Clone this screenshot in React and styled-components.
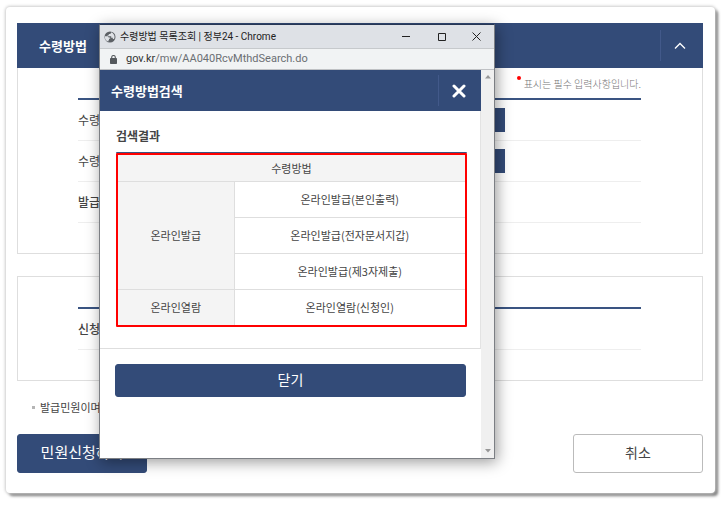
import React from "react";
import styled, { createGlobalStyle } from "styled-components";

const NAVY = "#334b78";

const GlobalStyle = createGlobalStyle`
  *, *::before, *::after { box-sizing: border-box; }
  body {
    margin: 0;
    background: #fff;
    color: #444;
    font-family: "Noto Sans CJK KR", "Noto Sans", sans-serif;
    font-size: 11px;
    line-height: 16px;
  }
  h1, h2, p { margin: 0; }
  button, input { font: inherit; }
`;

const Page = styled.div`
  padding: 7px 13px 12px 6px;
`;

const Card = styled.main`
  position: relative;
  padding: 16px 6px 20px 11px;
  border-radius: 4px;
  background: #fff;
  box-shadow: 0 0 3px 1px #ccc, 3px 3px 3px 0 #777;
`;

const Body = styled.div`
  padding-right: 6px;
`;

const Panel = styled.section`
  border: 1px solid #dedede;
  border-top-width: ${(p) => (p.$headed ? "0" : "1px")};
  margin-bottom: 22px;
`;

const PanelHeader = styled.header`
  display: flex;
  align-items: center;
  justify-content: space-between;
  height: 45px;
  margin: 0 -1px;
  padding-left: 22px;
  background: ${NAVY};
`;

const PanelTitle = styled.h2`
  color: #fff;
  font-size: 13px;
  font-weight: 700;
`;

const HeaderButton = styled.button`
  display: flex;
  align-items: center;
  justify-content: center;
  width: 43px;
  height: 31px;
  padding: 0 ${(p) => (p.$wide ? "4px" : "2px")} 0 0;
  border: 0;
  border-left: 1px solid #42598a;
  background: transparent;
`;

const PanelContent = styled.div`
  padding: ${(p) => p.$top} 61px 30px 60px;
`;

const Required = styled.p`
  display: flex;
  justify-content: flex-end;
  gap: 3px;
  height: 30px;
  padding-top: 8px;
  color: #777;
  font-size: 10px;
  font-weight: 300;

  &::before {
    content: "";
    width: 4px;
    height: 4px;
    border-radius: 50%;
    background: #f00;
  }
`;

const Fields = styled.div`
  border-top: 2px solid #3a5482;
`;

const FieldRow = styled.div`
  display: flex;
  align-items: center;
  height: 41px;
  border-bottom: 1px solid #eee;
`;

const FieldLabel = styled.span`
  flex: 0 0 120px;
  font-size: 12px;
  font-weight: ${(p) => (p.$strong ? 500 : 400)};
`;

const SearchButton = styled.button`
  width: 64px;
  height: 24px;
  margin-left: 243px;
  border: 0;
  background: ${NAVY};
`;

const Notice = styled.p`
  display: flex;
  align-items: center;
  gap: 5px;
  margin: -4px 0 19px 15px;

  &::before {
    content: "";
    width: 3px;
    height: 3px;
    background: #b5b5b5;
  }
`;

const Actions = styled.div`
  display: flex;
  justify-content: space-between;
`;

const ActionButton = styled.button`
  width: 130px;
  height: 39px;
  padding: 0 0 3px;
  border: 1px solid ${(p) => (p.$primary ? NAVY : "#bbb")};
  border-radius: 3px;
  background: ${(p) => (p.$primary ? NAVY : "#fff")};
  color: ${(p) => (p.$primary ? "#fff" : "#444")};
  font-size: ${(p) => (p.$primary ? "15px" : "14px")};
`;

const Popup = styled.section`
  position: absolute;
  top: 17px;
  left: 93px;
  width: 396px;
  border: 1px solid #7c7f84;
  border-top-color: #263654;
  background: #fff;
  box-shadow: 2px 3px 14px rgba(0, 0, 0, 0.4);
`;

const TitleBar = styled.header`
  display: flex;
  align-items: center;
  height: 24px;
  padding: 0 13px 0 4px;
  border-bottom: 1px solid #c6c9cc;
  background: #dee1e6;
`;

const WindowTitle = styled.h1`
  flex: 1;
  margin-left: 4px;
  color: #222;
  font-family: Roboto, "Noto Sans CJK KR", sans-serif;
  font-size: 10px;
  font-weight: 400;
  white-space: nowrap;
`;

const WindowControls = styled.div`
  display: flex;
  gap: 26px;
`;

const WindowButton = styled.button`
  display: flex;
  padding: 0;
  border: 0;
  background: transparent;
  color: #222;
`;

const AddressBar = styled.div`
  display: flex;
  align-items: center;
  gap: 9px;
  height: 21px;
  padding-left: 10px;
  border-bottom: 1px solid #bfc1c4;
  background: #f1f3f4;
`;

const Address = styled.p`
  color: #6b6f73;
  font-family: Roboto, sans-serif;
  font-size: 11px;

  b {
    color: #333;
    font-weight: 400;
  }
`;

const Viewport = styled.div`
  display: flex;
  height: 388px;
`;

const Document = styled.div`
  flex: 1;
`;

const ScrollBar = styled.div`
  display: flex;
  flex-direction: column;
  justify-content: space-between;
  align-items: center;
  width: 13px;
  padding: 5px 0;
  background: #f0f0f0;
`;

const PopupHeader = styled.header`
  display: flex;
  align-items: center;
  justify-content: space-between;
  height: 41px;
  padding-left: 11px;
  background: ${NAVY};
`;

const Results = styled.div`
  padding: 17px 13px 21px 16px;
  border-right: 1px solid #e3e3e3;
  border-bottom: 1px solid #dedede;
`;

const ResultsTitle = styled.h2`
  height: 25px;
  font-size: 12px;
  font-weight: 700;
`;

const Highlight = styled.div`
  border: 2px solid #f00;
  border-radius: 1px;
  box-shadow: 0 -1px 0 #3a5482;
`;

const ResultTable = styled.table`
  width: 100%;
  border-collapse: collapse;
  table-layout: fixed;
  text-align: center;

  th, td {
    height: 36px;
    padding: 0;
    border: 1px solid #dedede;
    font-weight: 400;
  }
  thead th { height: 26px; border-top: 0; }
  tr > :first-child { border-left: 0; }
  tr > :last-child { border-right: 0; }
  tbody tr > :only-child { border-left: 1px solid #dedede; }
  tbody tr:last-child > * { border-bottom: 0; }
  th { background: #f4f4f4; }
  col:first-child { width: 116px; }
`;

const PopupFooter = styled.footer`
  display: flex;
  padding: 15px 15px 0;
`;

const CloseButton = styled(ActionButton)`
  flex: 1;
  height: 33px;
  font-size: 14px;
`;

const groups = [
  {
    name: "온라인발급",
    items: ["온라인발급(본인출력)", "온라인발급(전자문서지갑)", "온라인발급(제3자제출)"],
  },
  { name: "온라인열람", items: ["온라인열람(신청인)"] },
];

const GlobeIcon = () => (
  <svg width="12" height="12" viewBox="0 0 12 12" aria-hidden="true">
    <circle cx="6" cy="6" r="5.5" fill="#5c6065" />
    <path d="M1 5.2h2.6l1.2 1.2h1.4v1.4H5v1.4h-.6v1.4A4.9 4.9 0 0 1 1 5.2ZM7 1.2v.9L6.2 3H4.8v1.3H3.6v.9h3.6v1.6h1.6v1.3h1.2A4.9 4.9 0 0 0 7 1.2Z" fill="#dee1e6" />
  </svg>
);

const LockIcon = () => (
  <svg width="7" height="9" viewBox="0 0 7 9" aria-hidden="true">
    <rect y="3" width="7" height="6" rx="0.8" fill="#54585c" />
    <path d="M1.7 3.5V2.3a1.8 1.8 0 0 1 3.6 0v1.2" fill="none" stroke="#54585c" strokeWidth="1.1" />
  </svg>
);

const ScrollArrow = ({ down }) => (
  <svg width="6" height="4" viewBox="0 0 6 4" aria-hidden="true">
    <path d={down ? "M0 0h6L3 3.5Z" : "M0 3.5h6L3 0Z"} fill="#979797" />
  </svg>
);

function SearchPopup() {
  return (
    <Popup aria-label="수령방법 목록조회">
      <TitleBar>
        <GlobeIcon />
        <WindowTitle>수령방법 목록조회 | 정부24 - Chrome</WindowTitle>
        <WindowControls>
          <WindowButton aria-label="최소화">
            <svg width="9" height="9" viewBox="0 0 9 9"><path d="M0 4.5h8" stroke="currentColor" /></svg>
          </WindowButton>
          <WindowButton aria-label="최대화">
            <svg width="9" height="9" viewBox="0 0 9 9"><path d="M1.5 1.5h7v7h-7z" fill="none" stroke="currentColor" /></svg>
          </WindowButton>
          <WindowButton aria-label="창 닫기">
            <svg width="9" height="9" viewBox="0 0 9 9"><path d="m.5.5 8 8m0-8-8 8" stroke="currentColor" /></svg>
          </WindowButton>
        </WindowControls>
      </TitleBar>
      <AddressBar>
        <LockIcon />
        <Address><b>gov.kr</b>/mw/AA040RcvMthdSearch.do</Address>
      </AddressBar>
      <Viewport>
        <Document>
          <PopupHeader>
            <PanelTitle>수령방법검색</PanelTitle>
            <HeaderButton aria-label="닫기">
              <svg width="14" height="14" viewBox="0 0 14 14">
                <path d="m2 2 10 10m0-10L2 12" stroke="#fff" strokeWidth="3" strokeLinecap="round" />
              </svg>
            </HeaderButton>
          </PopupHeader>
          <Results>
            <ResultsTitle>검색결과</ResultsTitle>
            <Highlight>
              <ResultTable>
                <colgroup><col /><col /></colgroup>
                <thead>
                  <tr><th colSpan={2}>수령방법</th></tr>
                </thead>
                <tbody>
                  {groups.flatMap(({ name, items }) =>
                    items.map((item, i) => (
                      <tr key={item}>
                        {i === 0 && <th rowSpan={items.length}>{name}</th>}
                        <td>{item}</td>
                      </tr>
                    ))
                  )}
                </tbody>
              </ResultTable>
            </Highlight>
          </Results>
          <PopupFooter>
            <CloseButton $primary>닫기</CloseButton>
          </PopupFooter>
        </Document>
        <ScrollBar>
          <ScrollArrow />
          <ScrollArrow down />
        </ScrollBar>
      </Viewport>
    </Popup>
  );
}

export default function App() {
  return (
    <Page>
      <GlobalStyle />
      <Card>
        <Body>
          <Panel $headed>
            <PanelHeader>
              <PanelTitle>수령방법</PanelTitle>
              <HeaderButton $wide aria-label="접기">
                <svg width="12" height="8" viewBox="0 0 12 8">
                  <path d="m1 6.5 5-5 5 5" fill="none" stroke="#fff" strokeWidth="1.3" />
                </svg>
              </HeaderButton>
            </PanelHeader>
            <PanelContent $top="0">
              <Required>표시는 필수 입력사항입니다.</Required>
              <Fields>
                <FieldRow>
                  <FieldLabel>수령방법</FieldLabel>
                  <SearchButton aria-label="수령방법 검색" />
                </FieldRow>
                <FieldRow>
                  <FieldLabel>수령기관</FieldLabel>
                  <SearchButton aria-label="수령기관 검색" />
                </FieldRow>
                <FieldRow>
                  <FieldLabel $strong>발급부수</FieldLabel>
                </FieldRow>
              </Fields>
            </PanelContent>
          </Panel>
          <Panel>
            <PanelContent $top="30px">
              <Fields>
                <FieldRow>
                  <FieldLabel $strong>신청내용</FieldLabel>
                </FieldRow>
              </Fields>
            </PanelContent>
          </Panel>
          <Notice>발급민원이며</Notice>
          <Actions>
            <ActionButton $primary>민원신청하기</ActionButton>
            <ActionButton>취소</ActionButton>
          </Actions>
        </Body>
        <SearchPopup />
      </Card>
    </Page>
  );
}
